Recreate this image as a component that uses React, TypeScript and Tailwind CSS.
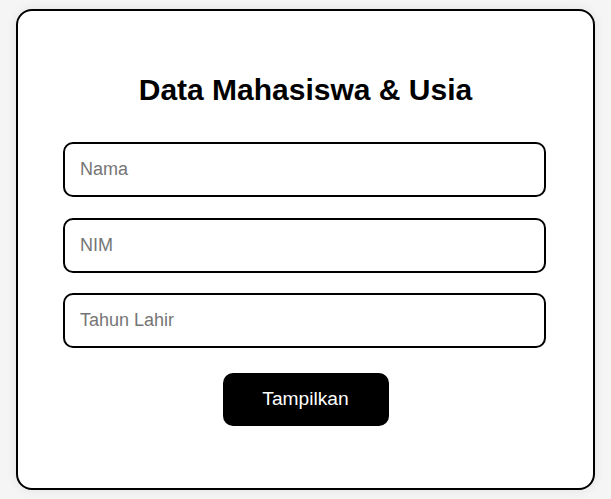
export default function App() {
  return (
    <div className="min-h-screen bg-[#f5f5f5] pt-[9px] pl-4" style={{ fontFamily: '"Liberation Sans", Arial, sans-serif' }}>
      <div className="w-[579px] rounded-2xl border-2 border-black bg-white px-[45px] pt-[61px] pb-[62px] shadow-[0_0_12px_rgba(0,0,0,0.08)]">
        <h1 className="text-center text-3xl font-bold text-black">Data Mahasiswa &amp; Usia</h1>
        <form className="mt-[34px] flex flex-col gap-[20.5px]" onSubmit={(e) => e.preventDefault()}>
          <input
            type="text"
            placeholder="Nama"
            className="h-[55px] w-[483px] rounded-[10px] border-2 border-black px-[15px] text-[18px] text-black outline-none placeholder:text-[#757575]"
          />
          <input
            type="text"
            placeholder="NIM"
            className="h-[55px] w-[483px] rounded-[10px] border-2 border-black px-[15px] text-[18px] text-black outline-none placeholder:text-[#757575]"
          />
          <input
            type="text"
            placeholder="Tahun Lahir"
            className="h-[55px] w-[483px] rounded-[10px] border-2 border-black px-[15px] text-[18px] text-black outline-none placeholder:text-[#757575]"
          />
          <div className="mt-[4.5px] flex justify-center">
            <button
              type="submit"
              className="h-[53px] w-[166px] rounded-[10px] bg-black text-[19.2px] text-white"
            >
              Tampilkan
            </button>
          </div>
        </form>
      </div>
    </div>
  );
}
